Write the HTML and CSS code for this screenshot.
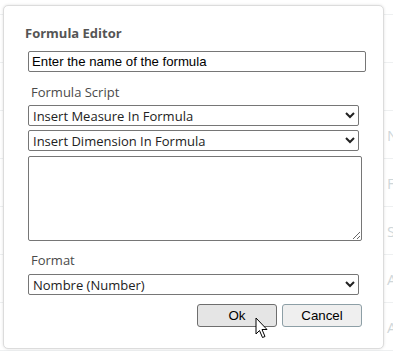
FILE: index.html
```html
<!DOCTYPE html>
<html lang="en">
<head>
    <meta charset="UTF-8">
    <meta name="viewport" content="width=device-width, initial-scale=1.0">
    <title>Formula Editor</title>
    <link rel="stylesheet" href="styles.css">
</head>
<body>
    <div class="list">
        <div class="row"></div>
        <div class="row"></div>
        <div class="row"></div>
        <div class="row"><span>N</span></div>
        <div class="row"><span>F</span></div>
        <div class="row"><span>S</span></div>
        <div class="row"><span>A</span></div>
        <div class="row"><span>A</span></div>
    </div>

    <div class="dialog">
        <h2 class="title">Formula Editor</h2>
        <input type="text" class="name" value="Enter the name of the formula">
        <label class="label">Formula Script</label>
        <select class="pick">
            <option>Insert Measure In Formula</option>
        </select>
        <select class="pick">
            <option>Insert Dimension In Formula</option>
        </select>
        <textarea class="script"></textarea>
        <label class="label format">Format</label>
        <select class="pick last">
            <option>Nombre (Number)</option>
        </select>
        <div class="actions">
            <button class="btn hover">Ok</button>
            <button class="btn cancel">Cancel</button>
        </div>
        <svg class="cursor" width="14" height="22" viewBox="0 0 14 22">
            <path d="M1 1 L1 17 L4.5 13.5 L7.5 20.5 L10 19.5 L7 12.5 L12 12.5 Z" fill="#fff" stroke="#000" stroke-width="1" stroke-linejoin="round"/>
        </svg>
    </div>
</body>
</html>
```

FILE: styles.css
```css
body { margin: 0; background: #fff; font-family: "Open Sans", sans-serif; width: 393px; height: 351px; overflow: hidden; position: relative; }

.list { display: flex; flex-direction: column; }
.list .row { height: 47px; border-bottom: 1px solid #eef0f1; display: flex; align-items: center; padding-left: 387px; font-size: 15px; color: #cfd7da; }
.list .row:first-child { height: 14px; }

.dialog { position: absolute; left: 3px; top: 5px; width: 381px; height: 344px; box-sizing: border-box; background: #fff; border: 1px solid #dcdcdc; border-radius: 5px; box-shadow: 0 0 3px rgba(0,0,0,0.12); padding: 18px 0 0 21px; display: flex; flex-direction: column; }

.title { margin: 0 0 9px 0; font-size: 13px; font-weight: 700; color: #555; line-height: 18px; }

.name { width: 338px; height: 21px; box-sizing: border-box; margin: 0 0 0 3px; border: 1px solid #767676; border-radius: 2px; padding: 1px 3px; font-family: "Liberation Sans", Arial, sans-serif; font-size: 13.2px; color: #000; }

.label { margin: 12px 0 5px 6px; font-size: 13px; color: #4a4a4a; line-height: 16px; }
.label.format { margin-top: 11px; margin-bottom: 6px; }

.pick { width: 331px; height: 21px; box-sizing: border-box; margin: 0 0 4px 3px; border: 1px solid #767676; border-radius: 2px; padding: 0; font-family: "Open Sans", sans-serif; font-size: 13px; color: #222; background: #fff; }
.pick.last { margin-bottom: 0; }

.script { width: 334px; height: 85px; box-sizing: border-box; margin: 1px 0 0 3px; border: 1px solid #767676; border-radius: 2px; resize: vertical; }

.actions { display: flex; gap: 5px; margin: 9px 0 0 172px; }
.btn { width: 80px; height: 23px; box-sizing: border-box; background: #efefef; border: 1px solid #767676; border-radius: 3px; font-family: "Liberation Sans", Arial, sans-serif; font-size: 13.33px; color: #000; padding: 0; }
.btn.hover { background: #e5e5e5; border-color: #6e6e6e; }
.btn.cancel { border-color: #8d9fa6; }

.cursor { position: absolute; left: 251px; top: 311px; }
```
